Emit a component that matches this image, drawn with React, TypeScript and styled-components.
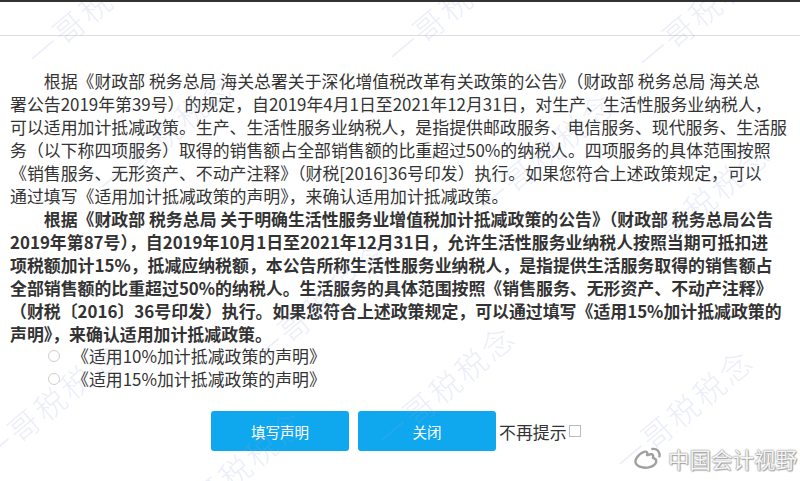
import styled, {createGlobalStyle} from "styled-components";
import {RiWeiboLine} from "react-icons/ri";

const GlobalStyle = createGlobalStyle`
  html, body {
    margin: 0;
    padding: 0;
    background: #fff;
  }
  body {
    font-family: "Noto Sans CJK SC", "Microsoft YaHei", sans-serif;
    color: #333;
  }
`

const Page = styled.div`
  position: relative;
  width: 800px;
  height: 481px;
  overflow: hidden;
  border-top: 2px solid #333;
  box-sizing: border-box;
  background: #fff;
`

const Header = styled.div`
  height: 33px;
  border-bottom: 1px solid #dedede;
`

const Content = styled.div`
  padding: 33px 0 0 10px;
`

const Paragraph = styled.div<{ $bold?: boolean }>`
  font-size: 16.9px;
  line-height: 23px;
  font-weight: ${p => (p.$bold ? 700 : 400)};
  color: #333;
`

const Line = styled.div<{ $indent?: boolean }>`
  white-space: nowrap;
  text-indent: ${p => (p.$indent ? "2em" : "0")};
`

const Options = styled.div`
  padding-left: 38px;
  font-size: 16.9px;
  line-height: 22.5px;
`

const Option = styled.label`
  display: flex;
  align-items: center;
  gap: 12px;
  color: #333;
`

const Radio = styled.span`
  width: 10px;
  height: 10px;
  border: 1px solid #cfcfcf;
  border-radius: 50%;
  background: #fff;
`

const Actions = styled.div`
  display: flex;
  align-items: center;
  padding-left: 201px;
  margin-top: 21px;
`

const Button = styled.button`
  width: 138px;
  height: 40px;
  margin-right: 9px;
  border: none;
  border-radius: 3px;
  background: #0fa8ef;
  color: #fff;
  font-family: inherit;
  font-size: 14.5px;
  cursor: pointer;
`

const Remind = styled.span`
  display: flex;
  align-items: center;
  margin-left: -6px;
  font-size: 16.9px;
  color: #333;
`

const Check = styled.span`
  width: 10px;
  height: 10px;
  margin-left: 2px;
  border: 1px solid #bcbcbc;
  background: #fff;
`

const Marks = styled.div`
  position: absolute;
  inset: 0;
  pointer-events: none;
`

const Mark = styled.span<{ $x: number; $y: number }>`
  position: absolute;
  left: ${p => p.$x}px;
  top: ${p => p.$y}px;
  transform: translate(-50%, -50%) rotate(-40deg);
  font-size: 31px;
  font-weight: 300;
  letter-spacing: 3px;
  white-space: nowrap;
  color: rgba(150, 160, 225, 0.2);
`

const Brand = styled.div`
  position: absolute;
  right: 3px;
  bottom: 7px;
  display: flex;
  align-items: center;
  gap: 6px;
  color: #f6f6f6;
  font-size: 21.5px;
  text-shadow: 0 0 1px #8a8a8a, 0 0 2px #9a9a9a, 1px 1px 1px #aaa;
`

const BrandIcon = styled.span`
  display: flex;
  color: #a0a0a0;
  font-size: 29px;
`

const para1 = [
    "根据《财政部 税务总局 海关总署关于深化增值税改革有关政策的公告》（财政部 税务总局 海关总",
    "署公告2019年第39号）的规定，自2019年4月1日至2021年12月31日，对生产、生活性服务业纳税人，",
    "可以适用加计抵减政策。生产、生活性服务业纳税人，是指提供邮政服务、电信服务、现代服务、生活服",
    "务（以下称四项服务）取得的销售额占全部销售额的比重超过50%的纳税人。四项服务的具体范围按照",
    "《销售服务、无形资产、不动产注释》（财税[2016]36号印发）执行。如果您符合上述政策规定，可以",
    "通过填写《适用加计抵减政策的声明》，来确认适用加计抵减政策。",
];

const para2 = [
    "根据《财政部 税务总局 关于明确生活性服务业增值税加计抵减政策的公告》（财政部 税务总局公告",
    "2019年第87号），自2019年10月1日至2021年12月31日，允许生活性服务业纳税人按照当期可抵扣进",
    "项税额加计15%，抵减应纳税额，本公告所称生活性服务业纳税人，是指提供生活服务取得的销售额占",
    "全部销售额的比重超过50%的纳税人。生活服务的具体范围按照《销售服务、无形资产、不动产注释》",
    "（财税〔2016〕36号印发）执行。如果您符合上述政策规定，可以通过填写《适用15%加计抵减政策的",
    "声明》，来确认适用加计抵减政策。",
];

const options = ["《适用10%加计抵减政策的声明》", "《适用15%加计抵减政策的声明》"];

// watermark centres as seen on the shot
const marks = [
    {x: 95, y: 2}, {x: 455, y: 0}, {x: 705, y: 6},
    {x: 165, y: 130}, {x: 545, y: 150}, {x: 700, y: 200},
    {x: 320, y: 300}, {x: 50, y: 400}, {x: 445, y: 383},
    {x: 683, y: 407}, {x: 235, y: 468},
];

const App = () => {
    return (
        <Page>
            <GlobalStyle/>
            <Header/>
            <Content>
                <Paragraph>
                    {para1.map((line, i) => (
                        <Line key={i} $indent={i === 0}>{line}</Line>
                    ))}
                </Paragraph>
                <Paragraph $bold>
                    {para2.map((line, i) => (
                        <Line key={i} $indent={i === 0}>{line}</Line>
                    ))}
                </Paragraph>
                <Options>
                    {options.map(text => (
                        <Option key={text}>
                            <Radio/>
                            {text}
                        </Option>
                    ))}
                </Options>
                <Actions>
                    <Button>填写声明</Button>
                    <Button>关闭</Button>
                    <Remind>
                        不再提示
                        <Check/>
                    </Remind>
                </Actions>
            </Content>
            <Marks>
                {marks.map((m, i) => (
                    <Mark key={i} $x={m.x} $y={m.y}>一哥税税念</Mark>
                ))}
            </Marks>
            <Brand>
                <BrandIcon><RiWeiboLine/></BrandIcon>
                中国会计视野
            </Brand>
        </Page>
    )
}

export default App;
